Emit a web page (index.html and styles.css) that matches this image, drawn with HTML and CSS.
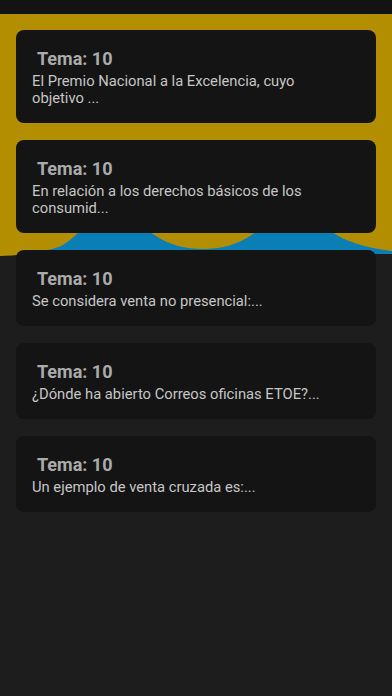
FILE: index.html
```html
<!DOCTYPE html>
<html lang="es">
<head>
<meta charset="utf-8">
<meta name="viewport" content="width=device-width, initial-scale=1">
<title>Temas</title>
<link rel="stylesheet" href="styles.css">
</head>
<body>
<div class="statusbar"></div>
<main class="content">
  <svg class="wave" width="392" height="250" viewBox="0 0 392 250" aria-hidden="true">
    <rect x="0" y="0" width="392" height="240" fill="#0a7fb6"/>
    <path fill="#b38e00" d="M0,0 H392 V237 C360,233 345,226 335,220 C315,207 305,200 295,200 C280,200 265,210 253,220 C238,231 220,235 203,235 C186,235 168,231 153,220 C140,210 125,200 112,200 C100,200 88,210 77,220 C68,228 62,233 52,235 C35,239 15,242 0,242 Z"/>
  </svg>
  <ul class="list">
    <li class="card">
      <h2 class="card-title">Tema: 10</h2>
      <p class="card-text">El Premio Nacional a la Excelencia, cuyo objetivo ...</p>
    </li>
    <li class="card">
      <h2 class="card-title">Tema: 10</h2>
      <p class="card-text">En relación a los derechos básicos de los consumid...</p>
    </li>
    <li class="card">
      <h2 class="card-title">Tema: 10</h2>
      <p class="card-text">Se considera venta no presencial:...</p>
    </li>
    <li class="card">
      <h2 class="card-title">Tema: 10</h2>
      <p class="card-text">¿Dónde ha abierto Correos oficinas ETOE?...</p>
    </li>
    <li class="card">
      <h2 class="card-title">Tema: 10</h2>
      <p class="card-text">Un ejemplo de venta cruzada es:...</p>
    </li>
  </ul>
</main>
</body>
</html>
```
FILE: styles.css
```css
* { box-sizing: border-box; }

html, body {
  margin: 0;
  padding: 0;
  background: #1d1d1d;
  font-family: Roboto, "Noto Sans", "Liberation Sans", sans-serif;
  width: 392px;
  height: 696px;
  overflow: hidden;
}

.statusbar {
  height: 14px;
  background: #131313;
}

.content {
  position: relative;
}

.wave {
  position: absolute;
  top: 0;
  left: 0;
  display: block;
  z-index: 0;
}

.list {
  position: relative;
  z-index: 1;
  list-style: none;
  margin: 0;
  padding: 16px 16px 0 16px;
  display: flex;
  flex-direction: column;
  gap: 17px;
}

.card {
  background: #141414;
  border-radius: 8px;
  padding: 18px 44px 16px 16px;
  display: flex;
  flex-direction: column;
  gap: 4px;
}

.card-title {
  margin: 0;
  padding-left: 5px;
  font-size: 18px;
  line-height: 21px;
  font-weight: 700;
  color: #ababab;
}

.card-text {
  margin: 0;
  font-size: 14.75px;
  line-height: 17px;
  font-weight: 400;
  color: #c6c6c6;
}
```
